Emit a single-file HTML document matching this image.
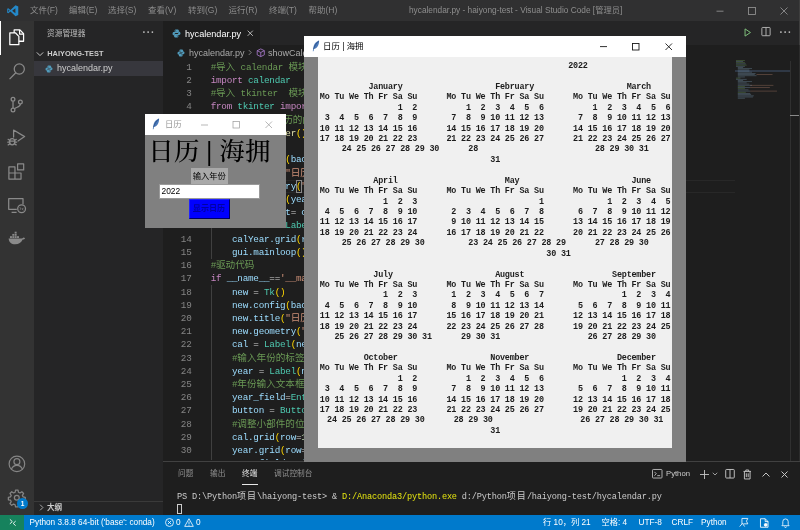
<!DOCTYPE html>
<html lang="zh-CN">
<head>
<meta charset="utf-8">
<title>hycalendar.py - haiyong-test - Visual Studio Code</title>
<style>
*{box-sizing:border-box;margin:0;padding:0}
html,body{width:800px;height:530px;overflow:hidden;background:#1e1e1e}
body{position:relative;font-family:"Liberation Sans","Noto Sans CJK SC",sans-serif;font-size:9px;color:#ccc}
#root{position:absolute;left:0;top:0;width:800px;height:530px;overflow:hidden;will-change:transform}
.abs{position:absolute}
svg{display:block;overflow:visible}
/* title bar */
#titlebar{left:0;top:0;width:800px;height:21px;background:#303031}
#titlebar .menu{position:absolute;top:0;height:21px;line-height:20.5px;font-size:8.5px;color:#8d8d8d;white-space:nowrap}
#titlebar .ttl{position:absolute;left:409px;top:0;height:21px;line-height:20.5px;font-size:8.3px;color:#8e8e8e;white-space:nowrap}
/* activity bar */
#activity{left:0;top:21px;width:33.5px;height:493.5px;background:#333333}
#sidebar{left:33.5px;top:21px;width:129.5px;height:493.5px;background:#252526}
#tabs{left:163px;top:21px;width:637px;height:24.3px;background:#252526}
#tab{left:0;top:0;width:97px;height:24.3px;background:#1e1e1e}
#crumbs{left:163px;top:45.3px;width:637px;height:15.3px;background:#1e1e1e;color:#a9a9a9;font-size:9px;line-height:16.5px;white-space:nowrap}
#code{left:163px;top:60.8px;width:572px;height:399.6px;overflow:hidden;font-family:"Liberation Mono","Noto Sans CJK SC",monospace;font-size:9.3px;letter-spacing:-0.25px}
#code .cj{font-size:9.6px;letter-spacing:0}
#term .cj{font-size:9px;letter-spacing:1px}
.ln{position:relative;height:13.22px;line-height:13.22px;white-space:pre}
.no{position:absolute;left:0;width:28.5px;text-align:right;color:#858585}
.tx{position:absolute;left:47.7px}
#panel{left:163px;top:461px;width:637px;height:53.5px;background:#1e1e1e;border-top:1px solid #414141}
#status{left:0;top:514.5px;width:800px;height:15.5px;background:#007acc;color:#fff;font-size:8.25px;line-height:15px;white-space:nowrap}
#status span{position:absolute;top:0}
/* tk windows */
.tk{background:#808080}
.tkbar{position:absolute;left:0;top:0;right:0;background:#fff}
.cl{height:10.43px;line-height:10.43px;white-space:pre;text-align:center}
</style>
</head>
<body>
<div id="root">

<!-- ===== VS Code title bar ===== -->
<div id="titlebar" class="abs">
  <svg class="abs" style="left:7px;top:5px" width="11.5" height="11.5" viewBox="0 0 100 100"><path d="M74 2 L30 43 L11 28 L2 33 L2 67 L11 72 L30 57 L74 98 L98 87 L98 13 Z M11 60 L11 40 L22 50 Z M73 72 L45 50 L73 28 Z" fill="#2489ca" fill-rule="evenodd"/></svg>
  <span class="menu" style="left:30px">文件(F)</span>
  <span class="menu" style="left:69px">编辑(E)</span>
  <span class="menu" style="left:108px">选择(S)</span>
  <span class="menu" style="left:148px">查看(V)</span>
  <span class="menu" style="left:188px">转到(G)</span>
  <span class="menu" style="left:228.5px">运行(R)</span>
  <span class="menu" style="left:269px">终端(T)</span>
  <span class="menu" style="left:308.5px">帮助(H)</span>
  <span class="ttl">hycalendar.py - haiyong-test - Visual Studio Code [管理员]</span>
  <svg class="abs" style="left:716px;top:6px" width="80" height="10" viewBox="0 0 80 10" fill="none" stroke="#9a9a9a" stroke-width="0.8"><path d="M0.5 5.2h7"/><rect x="32.5" y="1.5" width="7" height="7"/><path d="M64.5 1.5l7 7M71.5 1.5l-7 7"/></svg>
</div>

<!-- ===== activity bar ===== -->
<div id="activity" class="abs">
  <div class="abs" style="left:0;top:0;width:1.4px;height:33.5px;background:#fff"></div>
  <!-- explorer -->
  <svg class="abs" style="left:7.7px;top:7px" width="17.4" height="18.2" viewBox="0 0 24 24" preserveAspectRatio="none" fill="none" stroke="#fff" stroke-width="1.7" stroke-linejoin="round"><path d="M8.5 6.5V2.5h8l5 5v10h-6.5"/><path d="M16 2.5v5.5h5.5"/><path d="M2.5 6.5h8l4.5 4.5v11h-12.5z" /></svg>
  <!-- search -->
  <svg class="abs" style="left:7.9px;top:41.3px" width="18.7" height="18.7" viewBox="0 0 24 24" fill="none" stroke="#8a8a8a" stroke-width="1.6"><circle cx="14.5" cy="9" r="6.5"/><path d="M10 13.8L2 22"/></svg>
  <!-- scm -->
  <svg class="abs" style="left:7.9px;top:74.5px" width="17.2" height="17.2" viewBox="0 0 24 24" fill="none" stroke="#8a8a8a" stroke-width="1.8"><circle cx="7" cy="4.5" r="2.6"/><circle cx="7" cy="19.5" r="2.6"/><circle cx="17.3" cy="8.5" r="2.6"/><path d="M7 7.2v9.6M17.3 11.2c0 4-4.5 4.3-7.800 6"/></svg>
  <!-- debug -->
  <svg class="abs" style="left:7px;top:107px" width="19" height="19" viewBox="0 0 19 19" fill="none" stroke="#8a8a8a" stroke-width="1.25" stroke-linejoin="round" stroke-linecap="round"><path d="M6.600 9V2l11 6.600-6.600 4.400"/><ellipse cx="5.200" cy="13.800" rx="2.600" ry="3.100"/><path d="M2.800 13h4.800M2.600 12.200l-1.500-.9M2.600 14.200h-1.800M2.800 15.900l-1.600 1M7.800 12.200l1.500-.9M7.800 14.200h1.800M7.600 15.900l1.600 1"/></svg>
  <!-- extensions -->
  <svg class="abs" style="left:7.4px;top:140.8px" width="18.2" height="18.2" viewBox="0 0 24 24" fill="none" stroke="#8a8a8a" stroke-width="1.6" stroke-linejoin="round"><path d="M2.5 6.5h8v8h8v8h-16zM2.500 14.500h8v8M14 2.500h8v8h-8z"/></svg>
  <!-- remote explorer -->
  <svg class="abs" style="left:8px;top:176.5px" width="18" height="15.5" viewBox="0 0 18 15.5" fill="none" stroke="#8a8a8a" stroke-width="1.25" stroke-linejoin="round"><path d="M8.8 11.3H0.7V0.7H15V6.2M3.6 14.3h5"/><circle cx="13.6" cy="10.8" r="3.9"/><path d="M11.8 11.700l1.200-1.200-1.200-1.200M15.400 9.900l-1.200 1.200 1.200 1.200" stroke-width="0.8"/></svg>
  <!-- docker -->
  <svg class="abs" style="left:8px;top:211px" width="17" height="12.9" viewBox="0 0 26 19" fill="#8a8a8a"><path d="M1 9.500h19.500c1.200 0 2.500-.6 3.200-1.600.9.200 1.900.6 2.300 1.200-.5 1.500-2 2.200-3.500 2.200-2 4.700-6 7.200-11.500 7.200-6 0-9.700-3.300-10-9z"/><rect x="3" y="6" width="3" height="2.800"/><rect x="6.600" y="6" width="3" height="2.800"/><rect x="10.200" y="6" width="3" height="2.800"/><rect x="13.800" y="6" width="3" height="2.800"/><rect x="6.600" y="2.600" width="3" height="2.800"/><rect x="10.200" y="2.600" width="3" height="2.800"/><rect x="10.200" y="-.8" width="3" height="2.800"/></svg>
  <!-- account -->
  <svg class="abs" style="left:7.6px;top:434.2px" width="17.8" height="17.8" viewBox="0 0 24 24" fill="none" stroke="#858585" stroke-width="1.600"><circle cx="12" cy="12" r="10.500"/><circle cx="12" cy="9" r="4"/><path d="M4.500 19.500c1.500-4 4.500-5.500 7.500-5.500s6 1.500 7.500 5.500"/></svg>
  <!-- gear -->
  <svg class="abs" style="left:7.7px;top:467.8px" width="17.6" height="17.6" viewBox="0 0 24 24" fill="none" stroke="#858585" stroke-width="1.700" stroke-linejoin="round"><circle cx="12" cy="12" r="3.300"/><path d="M10.300 1.500h3.400l.6 3 2 .9 2.600-1.700 2.400 2.400-1.700 2.600.9 2 3 .6v3.400l-3 .6-.9 2 1.700 2.600-2.400 2.400-2.600-1.700-2 .9-.6 3h-3.400l-.6-3-2-.9-2.600 1.700-2.400-2.400 1.700-2.600-.9-2-3-.6v-3.400l3-.6.9-2-1.700-2.600 2.400-2.400 2.600 1.700 2-.9z"/></svg>
  <div class="abs" style="left:17px;top:476.500px;width:11px;height:11px;border-radius:50%;background:#007acc;color:#fff;font-size:6.500px;line-height:11px;text-align:center;font-weight:bold">1</div>
</div>

<!-- ===== side bar ===== -->
<div id="sidebar" class="abs">
  <span class="abs" style="left:13.500px;top:5.500px;font-size:7.700px;line-height:14px;color:#bbbbbb;white-space:nowrap">资源管理器</span>
  <span class="abs" style="left:109px;top:4.8px;font-size:10px;line-height:14px;color:#b5b5b5;letter-spacing:0.9px;font-weight:bold">···</span>
  <svg class="abs" style="left:2.8px;top:28.6px" width="8" height="8" viewBox="0 0 10 10" fill="none" stroke="#cccccc" stroke-width="1.2"><path d="M1 3l4 4 4-4"/></svg>
  <span class="abs" style="left:13.7px;top:25.5px;font-size:7.4px;line-height:14px;font-weight:bold;color:#cccccc;white-space:nowrap;letter-spacing:0.050px">HAIYONG-TEST</span>
  <div class="abs" style="left:0;top:40px;width:129.500px;height:15.300px;background:#37373d"></div>
  <svg class="abs pyic" style="left:11.500px;top:43.500px" width="8" height="8" viewBox="0 0 16 16"><path d="M7.900 1C5.800 1 4.600 1.900 4.600 3.200v1.600H8v.6H3.300C1.900 5.400 1 6.600 1 8.300c0 1.700.9 2.900 2.300 2.900h1.300V9.400c0-1.300 1.100-2.400 2.500-2.400h3.200c1.100 0 2-.9 2-2V3.200C12.300 1.900 11 1 9 1zM6 2.300a.7.700 0 110 1.400.7.700 0 010-1.400z" fill="#519aba"/><path d="M8.100 15c2.100 0 3.300-.9 3.300-2.200v-1.600H8v-.6h4.700c1.400 0 2.300-1.200 2.300-2.900 0-1.700-.9-2.900-2.300-2.900h-1.300v1.800c0 1.300-1.100 2.400-2.500 2.400H5.700c-1.100 0-2 .9-2 2v1.800C3.700 14.100 5 15 7 15zM10 13.700a.7.700 0 110-1.400.7.700 0 010 1.400z" fill="#519aba"/></svg>
  <span class="abs" style="left:23.500px;top:40px;font-size:9px;line-height:15.300px;color:#cccccc;white-space:nowrap">hycalendar.py</span>
  <!-- outline -->
  <div class="abs" style="left:0;top:479.500px;width:129.500px;height:1px;background:#3a3a3a"></div>
  <svg class="abs" style="left:4px;top:483px" width="7" height="7" viewBox="0 0 10 10" fill="none" stroke="#c5c5c5" stroke-width="1.200"><path d="M3 1l4 4-4 4"/></svg>
  <span class="abs" style="left:13.500px;top:479.500px;font-size:7.600px;line-height:14px;font-weight:bold;color:#cccccc;white-space:nowrap">大纲</span>
</div>

<!-- ===== tabs ===== -->
<div id="tabs" class="abs">
  <div id="tab" class="abs">
    <svg class="abs" style="left:9px;top:8px" width="9" height="9" viewBox="0 0 16 16"><path d="M7.900 1C5.800 1 4.600 1.900 4.600 3.200v1.600H8v.6H3.300C1.900 5.400 1 6.600 1 8.300c0 1.700.9 2.900 2.300 2.900h1.300V9.400c0-1.300 1.100-2.400 2.500-2.400h3.200c1.100 0 2-.9 2-2V3.200C12.300 1.900 11 1 9 1zM6 2.300a.7.700 0 110 1.400.7.700 0 010-1.400z" fill="#519aba"/><path d="M8.100 15c2.100 0 3.300-.9 3.300-2.200v-1.600H8v-.6h4.700c1.400 0 2.300-1.200 2.300-2.900 0-1.700-.9-2.900-2.300-2.900h-1.300v1.800c0 1.300-1.100 2.400-2.500 2.400H5.700c-1.100 0-2 .9-2 2v1.800C3.700 14.100 5 15 7 15zM10 13.700a.7.700 0 110-1.400.7.700 0 010 1.400z" fill="#519aba"/></svg>
    <span class="abs" style="left:22px;top:0.5px;font-size:9.1px;line-height:24px;color:#ffffff;white-space:nowrap">hycalendar.py</span>
    <svg class="abs" style="left:84px;top:9px" width="6.500" height="6.500" viewBox="0 0 10 10" fill="none" stroke="#d0d0d0" stroke-width="1.300"><path d="M1 1l8 8M9 1l-8 8"/></svg>
  </div>
  <!-- editor actions -->
  <svg class="abs" style="left:581px;top:6.6px" width="7.5" height="9" viewBox="0 0 8 10" fill="none" stroke="#7fbf7b" stroke-width="1.1" stroke-linejoin="round"><path d="M1 1l6 4-6 4z"/></svg>
  <svg class="abs" style="left:597.5px;top:6.400px" width="10" height="9.200" viewBox="0 0 10 10" fill="none" stroke="#b8b8b8" stroke-width="1"><rect x="0.500" y="0.500" width="9" height="9" rx="0.800"/><path d="M5 0.500v9"/></svg>
  <span class="abs" style="left:616.5px;top:4.500px;font-size:10px;line-height:14px;color:#b5b5b5;letter-spacing:0.9px;font-weight:bold">···</span>
</div>

<!-- ===== breadcrumbs ===== -->
<div id="crumbs" class="abs">
  <svg class="abs" style="left:14px;top:3.500px" width="8" height="8" viewBox="0 0 16 16"><path d="M7.900 1C5.800 1 4.600 1.900 4.600 3.200v1.600H8v.6H3.300C1.900 5.400 1 6.600 1 8.300c0 1.700.9 2.900 2.300 2.900h1.300V9.400c0-1.300 1.100-2.400 2.500-2.400h3.200c1.100 0 2-.9 2-2V3.200C12.300 1.900 11 1 9 1zM6 2.300a.7.700 0 110 1.400.7.700 0 010-1.400z" fill="#519aba"/><path d="M8.100 15c2.100 0 3.300-.9 3.300-2.200v-1.600H8v-.6h4.700c1.400 0 2.300-1.200 2.300-2.900 0-1.700-.9-2.900-2.300-2.900h-1.300v1.800c0 1.300-1.100 2.400-2.500 2.400H5.700c-1.100 0-2 .9-2 2v1.800C3.700 14.100 5 15 7 15zM10 13.700a.7.700 0 110-1.400.7.700 0 010 1.400z" fill="#519aba"/></svg>
  <span class="abs" style="left:26px;top:0">hycalendar.py</span>
  <svg class="abs" style="left:84px;top:4px" width="6" height="7" viewBox="0 0 10 10" fill="none" stroke="#a9a9a9" stroke-width="1.200"><path d="M3 1l4 4-4 4"/></svg>
  <svg class="abs" style="left:93px;top:3px" width="9.500" height="9.500" viewBox="0 0 16 16" fill="none" stroke="#b180d7" stroke-width="1.300" stroke-linejoin="round"><path d="M8 1.500l6 3v7l-6 3-6-3v-7zM2 4.500l6 3 6-3M8 7.500v7"/></svg>
  <span class="abs" style="left:105px;top:0">showCalender</span>
</div>

<!-- ===== code ===== -->
<div id="code" class="abs">
  <div class="abs" style="left:0;top:119px;width:572px;height:13.200px;border-top:1px solid #282828;border-bottom:1px solid #282828"></div>
  <div class="abs" style="left:133px;top:119.500px;width:5.500px;height:12.500px;border:1px solid #888"></div>
  <div class="abs" style="left:47.500px;top:79.300px;width:1px;height:119px;background:#404040"></div>
  <div class="abs" style="left:47.500px;top:224.700px;width:1px;height:180px;background:#404040"></div>
<div class="ln"><span class="no">1</span><span class="tx"><span style="color:#6A9955">#<span class="cj">导入</span> calendar <span class="cj">模块</span></span></span></div>
<div class="ln"><span class="no">2</span><span class="tx"><span style="color:#C586C0">import</span><span style="color:#D4D4D4"> </span><span style="color:#4EC9B0">calendar</span></span></div>
<div class="ln"><span class="no">3</span><span class="tx"><span style="color:#6A9955">#<span class="cj">导入</span> tkinter  <span class="cj">模块</span></span></span></div>
<div class="ln"><span class="no">4</span><span class="tx"><span style="color:#C586C0">from</span><span style="color:#D4D4D4"> </span><span style="color:#4EC9B0">tkinter</span><span style="color:#D4D4D4"> </span><span style="color:#C586C0">import</span><span style="color:#D4D4D4"> *</span></span></div>
<div class="ln"><span class="no">5</span><span class="tx"><span style="color:#6A9955">#<span class="cj">显示指定年份日历的函数</span></span></span></div>
<div class="ln"><span class="no">6</span><span class="tx"><span style="color:#569CD6">def</span><span style="color:#D4D4D4"> </span><span style="color:#DCDCAA">showCalender</span><span style="color:#FFD700">()</span><span style="color:#D4D4D4">:</span></span></div>
<div class="ln"><span class="no">7</span><span class="tx"><span style="color:#D4D4D4">    </span><span style="color:#9CDCFE">gui</span><span style="color:#D4D4D4"> = </span><span style="color:#4EC9B0">Tk</span><span style="color:#FFD700">()</span></span></div>
<div class="ln"><span class="no">8</span><span class="tx"><span style="color:#D4D4D4">    </span><span style="color:#9CDCFE">gui.config</span><span style="color:#FFD700">(</span><span style="color:#9CDCFE">background</span><span style="color:#D4D4D4">=</span><span style="color:#CE9178">&#x27;grey&#x27;</span><span style="color:#FFD700">)</span></span></div>
<div class="ln"><span class="no">9</span><span class="tx"><span style="color:#D4D4D4">    </span><span style="color:#9CDCFE">gui.title</span><span style="color:#FFD700">(</span><span style="color:#CE9178">&quot;<span class="cj">日历</span> | <span class="cj">海拥</span>&quot;</span><span style="color:#FFD700">)</span></span></div>
<div class="ln"><span class="no">10</span><span class="tx"><span style="color:#D4D4D4">    </span><span style="color:#9CDCFE">gui.geometry</span><span style="color:#FFD700">(</span><span style="color:#CE9178">&quot;550x600&quot;</span><span style="color:#FFD700">)</span></span></div>
<div class="ln"><span class="no">11</span><span class="tx"><span style="color:#D4D4D4">    </span><span style="color:#9CDCFE">year</span><span style="color:#D4D4D4"> = </span><span style="color:#4EC9B0">int</span><span style="color:#FFD700">(</span><span style="color:#9CDCFE">year_field.get</span><span style="color:#DA70D6">()</span><span style="color:#FFD700">)</span></span></div>
<div class="ln"><span class="no">12</span><span class="tx"><span style="color:#D4D4D4">    </span><span style="color:#9CDCFE">gui_content</span><span style="color:#D4D4D4">= </span><span style="color:#9CDCFE">calendar.calendar</span><span style="color:#FFD700">(</span><span style="color:#9CDCFE">year</span><span style="color:#FFD700">)</span></span></div>
<div class="ln"><span class="no">13</span><span class="tx"><span style="color:#D4D4D4">    </span><span style="color:#9CDCFE">calYear</span><span style="color:#D4D4D4"> = </span><span style="color:#4EC9B0">Label</span><span style="color:#FFD700">(</span><span style="color:#9CDCFE">gui</span><span style="color:#D4D4D4">, </span><span style="color:#9CDCFE">text</span><span style="color:#D4D4D4">= </span><span style="color:#9CDCFE">gui_content</span><span style="color:#D4D4D4">, </span><span style="color:#9CDCFE">font</span><span style="color:#D4D4D4">= </span><span style="color:#CE9178">&quot;Consolas 10 bold&quot;</span><span style="color:#FFD700">)</span></span></div>
<div class="ln"><span class="no">14</span><span class="tx"><span style="color:#D4D4D4">    </span><span style="color:#9CDCFE">calYear.grid</span><span style="color:#FFD700">(</span><span style="color:#9CDCFE">row</span><span style="color:#D4D4D4">=</span><span style="color:#B5CEA8">5</span><span style="color:#D4D4D4">, </span><span style="color:#9CDCFE">column</span><span style="color:#D4D4D4">=</span><span style="color:#B5CEA8">1</span><span style="color:#D4D4D4">,</span><span style="color:#9CDCFE">padx</span><span style="color:#D4D4D4">=</span><span style="color:#B5CEA8">20</span><span style="color:#FFD700">)</span></span></div>
<div class="ln"><span class="no">15</span><span class="tx"><span style="color:#D4D4D4">    </span><span style="color:#9CDCFE">gui.mainloop</span><span style="color:#FFD700">()</span></span></div>
<div class="ln"><span class="no">16</span><span class="tx"><span style="color:#6A9955">#<span class="cj">驱动代码</span></span></span></div>
<div class="ln"><span class="no">17</span><span class="tx"><span style="color:#C586C0">if</span><span style="color:#D4D4D4"> </span><span style="color:#9CDCFE">__name__</span><span style="color:#D4D4D4">==</span><span style="color:#CE9178">&#x27;__main__&#x27;</span><span style="color:#D4D4D4">:</span></span></div>
<div class="ln"><span class="no">18</span><span class="tx"><span style="color:#D4D4D4">    </span><span style="color:#9CDCFE">new</span><span style="color:#D4D4D4"> = </span><span style="color:#4EC9B0">Tk</span><span style="color:#FFD700">()</span></span></div>
<div class="ln"><span class="no">19</span><span class="tx"><span style="color:#D4D4D4">    </span><span style="color:#9CDCFE">new.config</span><span style="color:#FFD700">(</span><span style="color:#9CDCFE">background</span><span style="color:#D4D4D4">=</span><span style="color:#CE9178">&#x27;grey&#x27;</span><span style="color:#FFD700">)</span></span></div>
<div class="ln"><span class="no">20</span><span class="tx"><span style="color:#D4D4D4">    </span><span style="color:#9CDCFE">new.title</span><span style="color:#FFD700">(</span><span style="color:#CE9178">&quot;<span class="cj">日历</span>&quot;</span><span style="color:#FFD700">)</span></span></div>
<div class="ln"><span class="no">21</span><span class="tx"><span style="color:#D4D4D4">    </span><span style="color:#9CDCFE">new.geometry</span><span style="color:#FFD700">(</span><span style="color:#CE9178">&quot;250x140&quot;</span><span style="color:#FFD700">)</span></span></div>
<div class="ln"><span class="no">22</span><span class="tx"><span style="color:#D4D4D4">    </span><span style="color:#9CDCFE">cal</span><span style="color:#D4D4D4"> = </span><span style="color:#4EC9B0">Label</span><span style="color:#FFD700">(</span><span style="color:#9CDCFE">new</span><span style="color:#D4D4D4">, </span><span style="color:#9CDCFE">text</span><span style="color:#D4D4D4">=</span><span style="color:#CE9178">&quot;<span class="cj">日历</span> | <span class="cj">海拥</span>&quot;</span><span style="color:#D4D4D4">,</span><span style="color:#9CDCFE">bg</span><span style="color:#D4D4D4">=</span><span style="color:#CE9178">&#x27;grey&#x27;</span><span style="color:#FFD700">)</span></span></div>
<div class="ln"><span class="no">23</span><span class="tx"><span style="color:#D4D4D4">    </span><span style="color:#6A9955">#<span class="cj">输入年份的标签</span></span></span></div>
<div class="ln"><span class="no">24</span><span class="tx"><span style="color:#D4D4D4">    </span><span style="color:#9CDCFE">year</span><span style="color:#D4D4D4"> = </span><span style="color:#4EC9B0">Label</span><span style="color:#FFD700">(</span><span style="color:#9CDCFE">new</span><span style="color:#D4D4D4">, </span><span style="color:#9CDCFE">text</span><span style="color:#D4D4D4">=</span><span style="color:#CE9178">&quot;<span class="cj">输入年份</span>&quot;</span><span style="color:#D4D4D4">, </span><span style="color:#9CDCFE">bg</span><span style="color:#D4D4D4">=</span><span style="color:#CE9178">&#x27;dark grey&#x27;</span><span style="color:#FFD700">)</span></span></div>
<div class="ln"><span class="no">25</span><span class="tx"><span style="color:#D4D4D4">    </span><span style="color:#6A9955">#<span class="cj">年份输入文本框</span></span></span></div>
<div class="ln"><span class="no">26</span><span class="tx"><span style="color:#D4D4D4">    </span><span style="color:#9CDCFE">year_field</span><span style="color:#D4D4D4">=</span><span style="color:#4EC9B0">Entry</span><span style="color:#FFD700">(</span><span style="color:#9CDCFE">new</span><span style="color:#FFD700">)</span></span></div>
<div class="ln"><span class="no">27</span><span class="tx"><span style="color:#D4D4D4">    </span><span style="color:#9CDCFE">button</span><span style="color:#D4D4D4"> = </span><span style="color:#4EC9B0">Button</span><span style="color:#FFD700">(</span><span style="color:#9CDCFE">new</span><span style="color:#D4D4D4">, </span><span style="color:#9CDCFE">text</span><span style="color:#D4D4D4">=</span><span style="color:#CE9178">&#x27;<span class="cj">显示日历</span>&#x27;</span><span style="color:#D4D4D4">,</span><span style="color:#9CDCFE">fg</span><span style="color:#D4D4D4">=</span><span style="color:#CE9178">&#x27;Black&#x27;</span><span style="color:#FFD700">)</span></span></div>
<div class="ln"><span class="no">28</span><span class="tx"><span style="color:#D4D4D4">    </span><span style="color:#6A9955">#<span class="cj">调整小部件的位置</span></span></span></div>
<div class="ln"><span class="no">29</span><span class="tx"><span style="color:#D4D4D4">    </span><span style="color:#9CDCFE">cal.grid</span><span style="color:#FFD700">(</span><span style="color:#9CDCFE">row</span><span style="color:#D4D4D4">=</span><span style="color:#B5CEA8">1</span><span style="color:#D4D4D4">, </span><span style="color:#9CDCFE">column</span><span style="color:#D4D4D4">=</span><span style="color:#B5CEA8">1</span><span style="color:#FFD700">)</span></span></div>
<div class="ln"><span class="no">30</span><span class="tx"><span style="color:#D4D4D4">    </span><span style="color:#9CDCFE">year.grid</span><span style="color:#FFD700">(</span><span style="color:#9CDCFE">row</span><span style="color:#D4D4D4">=</span><span style="color:#B5CEA8">2</span><span style="color:#D4D4D4">, </span><span style="color:#9CDCFE">column</span><span style="color:#D4D4D4">=</span><span style="color:#B5CEA8">1</span><span style="color:#FFD700">)</span></span></div>
<div class="ln"><span class="no">31</span><span class="tx"><span style="color:#D4D4D4">    </span><span style="color:#9CDCFE">year_field.grid</span><span style="color:#FFD700">(</span><span style="color:#9CDCFE">row</span><span style="color:#D4D4D4">=</span><span style="color:#B5CEA8">3</span><span style="color:#D4D4D4">, </span><span style="color:#9CDCFE">column</span><span style="color:#D4D4D4">=</span><span style="color:#B5CEA8">1</span><span style="color:#FFD700">)</span></span></div>

</div>

<!-- minimap -->
<div class="abs" id="minimap" style="left:735px;top:59.3px;width:55px;height:401px">
  <div class="abs" style="left:0;top:11px;width:55px;height:1.300px;background:#2f3845"></div>
  <svg class="abs" style="left:0.800px;top:0.300px" width="49" height="41.500" viewBox="0 0 55 45" preserveAspectRatio="none">
    <g fill="#6a9955" opacity=".5"><rect x="0" y="0" width="10" height="0.800"/><rect x="0" y="2.500" width="10" height="0.800"/><rect x="0" y="5.100" width="12" height="0.800"/><rect x="0" y="19.200" width="5" height="0.800"/><rect x="2" y="28.200" width="8" height="0.800"/><rect x="2" y="30.700" width="8" height="0.800"/><rect x="2" y="34.600" width="9" height="0.800"/></g>
    <g fill="#8fb8d8" opacity=".38"><rect x="0" y="1.200" width="8" height="0.800"/><rect x="0" y="3.800" width="11" height="0.800"/><rect x="0" y="6.400" width="10" height="0.800"/><rect x="2" y="7.700" width="6" height="0.800"/><rect x="2" y="9" width="16" height="0.800"/><rect x="2" y="10.300" width="13" height="0.800"/><rect x="2" y="11.600" width="13" height="0.800"/><rect x="2" y="12.800" width="16" height="0.800"/><rect x="2" y="14.100" width="20" height="0.800"/><rect x="2" y="15.400" width="19" height="0.800"/><rect x="2" y="16.700" width="21" height="0.800"/><rect x="2" y="18" width="8" height="0.800"/><rect x="0" y="20.500" width="12" height="0.800"/><rect x="2" y="21.800" width="6" height="0.800"/><rect x="2" y="23.100" width="16" height="0.800"/><rect x="2" y="24.400" width="10" height="0.800"/><rect x="2" y="25.700" width="13" height="0.800"/><rect x="2" y="27" width="16" height="0.800"/><rect x="2" y="29.500" width="14" height="0.800"/><rect x="2" y="32" width="12" height="0.800"/><rect x="2" y="33.300" width="14" height="0.800"/><rect x="2" y="35.900" width="14" height="0.800"/><rect x="2" y="37.200" width="15" height="0.800"/><rect x="2" y="38.500" width="18" height="0.800"/><rect x="2" y="39.700" width="17" height="0.800"/><rect x="2" y="41" width="8" height="0.800"/></g>
    <g fill="#ce9178" opacity=".4"><rect x="23" y="15.400" width="18" height="0.800"/><rect x="16" y="27" width="26" height="0.800"/><rect x="16" y="29.500" width="22" height="0.800"/><rect x="16" y="33.300" width="30" height="0.800"/></g>
  </svg>
</div>
<div class="abs" style="left:790px;top:60.800px;width:10px;height:401px;border-left:1px solid #303030"></div>
<div class="abs" style="left:790px;top:114.500px;width:10px;height:1.500px;background:#8a8a8a"></div>

<div class="abs" style="left:799px;top:0;width:1px;height:45px;background:#3e3e3e"></div>
<div class="abs" style="left:799px;top:45px;width:1px;height:416px;background:#2c2c2c"></div>

<!-- ===== panel ===== -->
<div id="panel" class="abs">
  <span class="abs" style="left:15px;top:5.4px;font-size:7.7px;line-height:14px;color:#8f8f8f;white-space:nowrap">问题</span>
  <span class="abs" style="left:47px;top:5.4px;font-size:7.7px;line-height:14px;color:#8f8f8f;white-space:nowrap">输出</span>
  <span class="abs" style="left:79px;top:5.4px;font-size:7.7px;line-height:14px;color:#e7e7e7;white-space:nowrap">终端</span>
  <div class="abs" style="left:79px;top:21.500px;width:15.500px;height:1px;background:#e7e7e7"></div>
  <span class="abs" style="left:111px;top:5.4px;font-size:7.7px;line-height:14px;color:#8f8f8f;white-space:nowrap">调试控制台</span>
  <!-- panel actions -->
  <svg class="abs" style="left:489px;top:7px" width="10.500" height="9.500" viewBox="0 0 11 10" fill="none" stroke="#c5c5c5" stroke-width="0.900" stroke-linejoin="round"><rect x="0.500" y="0.500" width="10" height="9" rx="0.800"/><path d="M2.500 3l2 2-2 2M5.500 7h3"/></svg>
  <span class="abs" style="left:503px;top:5px;font-size:7.700px;line-height:14px;color:#cccccc;white-space:nowrap">Python</span>
  <svg class="abs" style="left:536.500px;top:7.500px" width="9" height="9" viewBox="0 0 10 10" fill="none" stroke="#c5c5c5" stroke-width="1"><path d="M5 0v10M0 5h10"/></svg>
  <svg class="abs" style="left:549px;top:10px" width="6" height="4.500" viewBox="0 0 8 6" fill="none" stroke="#c5c5c5" stroke-width="1"><path d="M1 1l3 3 3-3"/></svg>
  <svg class="abs" style="left:561.500px;top:7px" width="10" height="9.500" viewBox="0 0 10 10" fill="none" stroke="#c5c5c5" stroke-width="1"><rect x="0.500" y="0.500" width="9" height="9" rx="0.800"/><path d="M5 0.500v9"/></svg>
  <svg class="abs" style="left:580px;top:6.500px" width="8.500" height="10.500" viewBox="0 0 9 11" fill="none" stroke="#c5c5c5" stroke-width="1"><path d="M0.500 2.500h8M3 2.500v-1.500h3v1.500M1.500 2.500v8h6v-8M3.500 4.500v4M5.500 4.500v4"/></svg>
  <svg class="abs" style="left:598.500px;top:9.500px" width="8" height="5" viewBox="0 0 8 5" fill="none" stroke="#c5c5c5" stroke-width="1"><path d="M0.500 4.500l3.500-3.500 3.500 3.500"/></svg>
  <svg class="abs" style="left:617.500px;top:8.500px" width="7" height="7" viewBox="0 0 7 7" fill="none" stroke="#c5c5c5" stroke-width="1"><path d="M0.500 0.500l6 6M6.500 0.500l-6 6"/></svg>
  <!-- terminal -->
  <div class="abs" id="term" style="left:14px;top:30px;font-family:'Liberation Mono','Noto Sans CJK SC',monospace;font-size:8.600px;letter-spacing:-0.160px;line-height:11.500px;color:#cccccc;white-space:pre">PS D:\Python<span class="cj">项目</span>\haiyong-test&gt; &amp; <span style="color:#e5e510">D:/Anaconda3/python.exe</span> d:/Python<span class="cj">项目</span>/haiyong-test/hycalendar.py</div>
  <div class="abs" style="left:14px;top:41.5px;width:5px;height:10.3px;border:1px solid #cccccc"></div>
</div>

<!-- ===== status bar ===== -->
<div id="status" class="abs">
  <div class="abs" style="left:0;top:0;width:24.200px;height:15.500px;background:#16825d"></div>
  <svg class="abs" style="left:8.5px;top:3.5px" width="7.5" height="9" viewBox="0 0 8 10" fill="none" stroke="#fff" stroke-width="1"><path d="M0.8 1.5l2.7 2.5-2.7 2.500M7.200 3.500l-2.700 2.500 2.700 2.500" /></svg>
  <span style="left:29.500px">Python 3.8.8 64-bit ('base': conda)</span>
  <svg class="abs" style="left:165px;top:3.500px" width="9" height="9" viewBox="0 0 10 10" fill="none" stroke="#fff" stroke-width="0.900"><circle cx="5" cy="5" r="4.400"/><path d="M3.200 3.200l3.600 3.600M6.800 3.200l-3.600 3.600"/></svg>
  <span style="left:176px">0</span>
  <svg class="abs" style="left:184px;top:3.500px" width="10" height="9" viewBox="0 0 11 10" fill="none" stroke="#fff" stroke-width="0.900" stroke-linejoin="round"><path d="M5.500 0.800l4.800 8.500h-9.600zM5.500 3.800v3M5.500 7.500v1"/></svg>
  <span style="left:196px">0</span>
  <span style="left:543px">行 10，列 21</span>
  <span style="left:601.500px">空格: 4</span>
  <span style="left:638.500px">UTF-8</span>
  <span style="left:671.500px">CRLF</span>
  <span style="left:701px">Python</span>
  <svg class="abs" style="left:739px;top:3.500px" width="9.500" height="9" viewBox="0 0 10 10" fill="none" stroke="#fff" stroke-width="0.900" stroke-linejoin="round"><path d="M3 0.500h6.500l-1.500 3 1.500 3h-5M3 0.500v6M3.500 6l-3 3.500M3.500 6l2.500 3.500" /></svg>
  <svg class="abs" style="left:759.500px;top:3px" width="8.500" height="10" viewBox="0 0 9 10" fill="none" stroke="#fff" stroke-width="0.900" stroke-linejoin="round"><path d="M0.500 0.500h5l3 3v6h-8zM5.500 0.500v3h3"/><circle cx="6" cy="7" r="1.500" fill="#fff"/></svg>
  <svg class="abs" style="left:781px;top:3px" width="9" height="10" viewBox="0 0 10 11" fill="none" stroke="#fff" stroke-width="0.900" stroke-linejoin="round"><path d="M1 8.500h8l-1-1.500v-3a3 3 0 00-6 0v3zM4 9.500a1 1 0 002 0"/></svg>
</div>

<!-- ===== small Tk window ===== -->
<div class="abs tk" id="tk1" style="left:145px;top:113.500px;width:141px;height:114.200px">
  <div class="tkbar" style="height:21px">
    <svg class="abs" style="left:7px;top:4.500px" width="8.500" height="12" viewBox="0 0 9 12"><path d="M7.500 0.300C4.500 1.200 1.800 4 1.400 8.200L0.800 11.500h0.800l0.500-2.200C4.800 8.800 7.800 5.500 7.500 0.300z" fill="#4a78b8"/><path d="M7.300 0.600C5 2.500 2.800 5.500 1.600 9.200" stroke="#1e3f73" stroke-width="0.600" fill="none"/></svg>
    <span class="abs" style="left:20px;top:0;font-size:8.400px;line-height:21px;color:#999999;white-space:nowrap">日历</span>
    <svg class="abs" style="left:56px;top:7px" width="72" height="8" viewBox="0 0 72 8" fill="none" stroke="#999999" stroke-width="0.700"><path d="M0 4h7"/><rect x="32" y="0.500" width="6.500" height="6.500"/><path d="M64.500 0.500l6.500 6.500M71 0.500l-6.500 6.500"/></svg>
  </div>
  <div class="abs" id="tkhead" style="left:3.2px;top:22px;width:130px;height:35px;text-align:left;letter-spacing:0.25px;font-family:'Liberation Serif','Noto Serif CJK SC',serif;font-size:25.500px;line-height:32px;color:#000;white-space:nowrap;font-weight:500">日历 <b style="font-size:27px;line-height:10px;position:relative;top:0.5px">|</b> 海拥</div>
  <div class="abs" style="left:45.500px;top:54px;width:37.500px;height:16.500px;background:#a9a9a9;color:#000;font-size:8.300px;line-height:16px;text-align:center;white-space:nowrap">输入年份</div>
  <div class="abs" style="left:14px;top:70.500px;width:100.800px;height:14.700px;background:#fff;border:1px solid #9a9a9a;color:#000;font-size:8.400px;line-height:12.500px;padding-left:1.500px">2022</div>
  <div class="abs" style="left:43.500px;top:85.200px;width:41px;height:20.400px;background:#0000ff;border:1px solid;border-color:#2020ff #000060 #000060 #2020ff;color:#0000a4;font-weight:bold;font-size:8.1px;line-height:18.5px;text-align:center;white-space:nowrap">显示日历</div>
</div>

<!-- ===== big Tk window ===== -->
<div class="abs tk" id="tk2" style="left:303.800px;top:35.700px;width:382px;height:426px">
  <div class="tkbar" style="height:21.300px">
    <svg class="abs" style="left:8px;top:4.500px" width="8.500" height="12" viewBox="0 0 9 12"><path d="M7.500 0.300C4.500 1.200 1.800 4 1.400 8.200L0.800 11.500h0.800l0.500-2.200C4.800 8.800 7.800 5.500 7.500 0.300z" fill="#4a78b8"/><path d="M7.300 0.600C5 2.500 2.800 5.500 1.600 9.200" stroke="#1e3f73" stroke-width="0.600" fill="none"/></svg>
    <span class="abs" style="left:19.3px;top:0.5px;font-size:8.4px;line-height:21px;color:#000;white-space:nowrap">日历 | 海拥</span>
    <svg class="abs" style="left:296px;top:7.500px" width="72" height="8" viewBox="0 0 72 8" fill="none" stroke="#1a1a1a" stroke-width="0.9"><path d="M0 3.600h7"/><rect x="32.500" y="0.500" width="6.500" height="6.500"/><path d="M65.500 0.500l6.500 6.500M72 0.500l-6.500 6.500"/></svg>
  </div>
  <div class="abs" id="cal" style="left:14px;top:21.3px;width:354.7px;height:390.8px;background:#f0f0f0;color:#1c1c1c;padding-top:4.100px;font-family:'Liberation Mono',monospace;font-weight:bold;font-size:8.45px;letter-spacing:-0.193px">
<div class="cl">                                  2022</div>
<div class="cl">&nbsp;</div>
<div class="cl">      January                   February                   March</div>
<div class="cl">Mo Tu We Th Fr Sa Su      Mo Tu We Th Fr Sa Su      Mo Tu We Th Fr Sa Su</div>
<div class="cl">                1  2          1  2  3  4  5  6          1  2  3  4  5  6</div>
<div class="cl"> 3  4  5  6  7  8  9       7  8  9 10 11 12 13       7  8  9 10 11 12 13</div>
<div class="cl">10 11 12 13 14 15 16      14 15 16 17 18 19 20      14 15 16 17 18 19 20</div>
<div class="cl">17 18 19 20 21 22 23      21 22 23 24 25 26 27      21 22 23 24 25 26 27</div>
<div class="cl">24 25 26 27 28 29 30      28                        28 29 30 31</div>
<div class="cl">31</div>
<div class="cl">&nbsp;</div>
<div class="cl">       April                      May                       June</div>
<div class="cl">Mo Tu We Th Fr Sa Su      Mo Tu We Th Fr Sa Su      Mo Tu We Th Fr Sa Su</div>
<div class="cl">             1  2  3                         1             1  2  3  4  5</div>
<div class="cl"> 4  5  6  7  8  9 10       2  3  4  5  6  7  8       6  7  8  9 10 11 12</div>
<div class="cl">11 12 13 14 15 16 17       9 10 11 12 13 14 15      13 14 15 16 17 18 19</div>
<div class="cl">18 19 20 21 22 23 24      16 17 18 19 20 21 22      20 21 22 23 24 25 26</div>
<div class="cl">25 26 27 28 29 30         23 24 25 26 27 28 29      27 28 29 30</div>
<div class="cl">                          30 31</div>
<div class="cl">&nbsp;</div>
<div class="cl">        July                     August                  September</div>
<div class="cl">Mo Tu We Th Fr Sa Su      Mo Tu We Th Fr Sa Su      Mo Tu We Th Fr Sa Su</div>
<div class="cl">             1  2  3       1  2  3  4  5  6  7                1  2  3  4</div>
<div class="cl"> 4  5  6  7  8  9 10       8  9 10 11 12 13 14       5  6  7  8  9 10 11</div>
<div class="cl">11 12 13 14 15 16 17      15 16 17 18 19 20 21      12 13 14 15 16 17 18</div>
<div class="cl">18 19 20 21 22 23 24      22 23 24 25 26 27 28      19 20 21 22 23 24 25</div>
<div class="cl">25 26 27 28 29 30 31      29 30 31                  26 27 28 29 30</div>
<div class="cl">&nbsp;</div>
<div class="cl">      October                   November                  December</div>
<div class="cl">Mo Tu We Th Fr Sa Su      Mo Tu We Th Fr Sa Su      Mo Tu We Th Fr Sa Su</div>
<div class="cl">                1  2          1  2  3  4  5  6                1  2  3  4</div>
<div class="cl"> 3  4  5  6  7  8  9       7  8  9 10 11 12 13       5  6  7  8  9 10 11</div>
<div class="cl">10 11 12 13 14 15 16      14 15 16 17 18 19 20      12 13 14 15 16 17 18</div>
<div class="cl">17 18 19 20 21 22 23      21 22 23 24 25 26 27      19 20 21 22 23 24 25</div>
<div class="cl">24 25 26 27 28 29 30      28 29 30                  26 27 28 29 30 31</div>
<div class="cl">31</div>
<div class="cl">&nbsp;</div>
  </div>
</div>

</div>
</body>
</html>
